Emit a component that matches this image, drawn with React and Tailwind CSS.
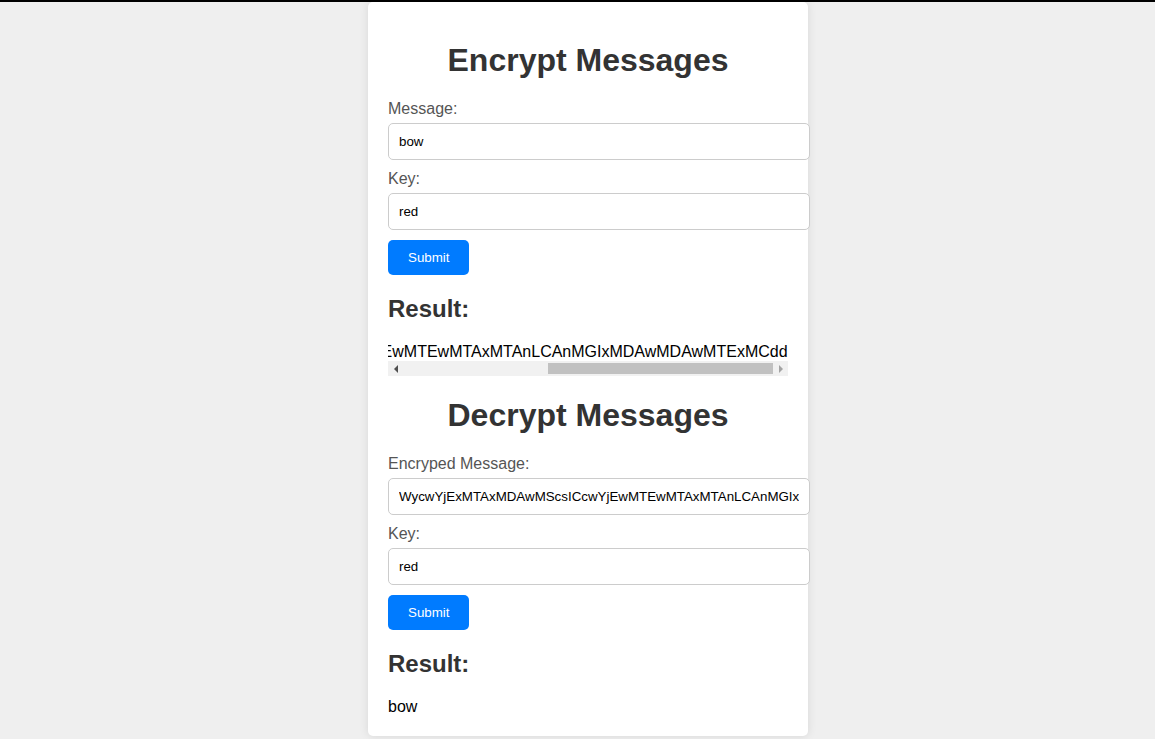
import { useEffect, useRef } from 'react';

const encrypted = "WycwYjExMTAxMDAwMScsICcwYjEwMTEwMTAxMTAnLCAnMGIxMDAwMDAwMTExMCdd";

function Field({ label, value }) {
  return (
    <div>
      <label className="block text-[16px] leading-[18px] text-[#555] mb-[5px]">{label}</label>
      <input
        type="text"
        defaultValue={value}
        className="block w-[422px] h-[37px] px-[10px] mb-[10px] border border-[#ccc] rounded-[5px] bg-white text-[13.333px] text-black outline-none"
      />
    </div>
  );
}

// classic horizontal scrollbar, scrolled to the far right
function ScrollBar() {
  return (
    <div className="flex h-[15px] bg-[#f1f1f1]">
      <div className="w-[15px] flex items-center justify-center">
        <div className="w-0 h-0 border-y-[4px] border-y-transparent border-r-[4px] border-r-[#505050]" />
      </div>
      <div className="flex-1 flex justify-end items-center">
        <div className="w-[225px] h-[11px] bg-[#c1c1c1]" />
      </div>
      <div className="w-[15px] flex items-center justify-center">
        <div className="w-0 h-0 border-y-[4px] border-y-transparent border-l-[4px] border-l-[#a3a3a3]" />
      </div>
    </div>
  );
}

function Section({ title, messageLabel, messageValue, result, scrollRef, first, scrolls }) {
  return (
    <section>
      <h1 className={`text-[32px] leading-[37px] font-bold text-[#333] text-center mb-[21px] ${first ? '' : 'mt-[21px]'}`}>
        {title}
      </h1>
      <Field label={messageLabel} value={messageValue} />
      <Field label="Key:" value="red" />
      <button className="h-[35px] px-5 rounded-[5px] bg-[#007bff] text-white text-[13.333px]">
        Submit
      </button>
      <h2 className="mt-[20px] mb-[20px] text-[24px] leading-[27.6px] font-bold text-[#333]">Result:</h2>
      <div ref={scrollRef} className="overflow-hidden whitespace-nowrap text-[16px] leading-[18.4px] text-black">
        {result}
      </div>
      {scrolls && <ScrollBar />}
    </section>
  );
}

export default function App() {
  const scrollRef = useRef(null);

  useEffect(() => {
    const el = scrollRef.current;
    if (el) el.scrollLeft = el.scrollWidth;
  }, []);

  return (
    <div className="min-h-screen bg-[#efefef] font-['Liberation_Sans',Arial,sans-serif]">
      <div className="h-[2px] bg-black" />
      <div className="flex justify-center pl-[21px]">
        <div className="w-[440px] bg-white rounded-[5px] shadow-[0_0_10px_rgba(0,0,0,0.1)] px-5 pt-[40px] pb-5">
          <Section
            first
            scrolls
            title="Encrypt Messages"
            messageLabel="Message:"
            messageValue="bow"
            result={encrypted}
            scrollRef={scrollRef}
          />
          <Section
            title="Decrypt Messages"
            messageLabel="Encryped Message:"
            messageValue={encrypted}
            result="bow"
          />
        </div>
      </div>
    </div>
  );
}
